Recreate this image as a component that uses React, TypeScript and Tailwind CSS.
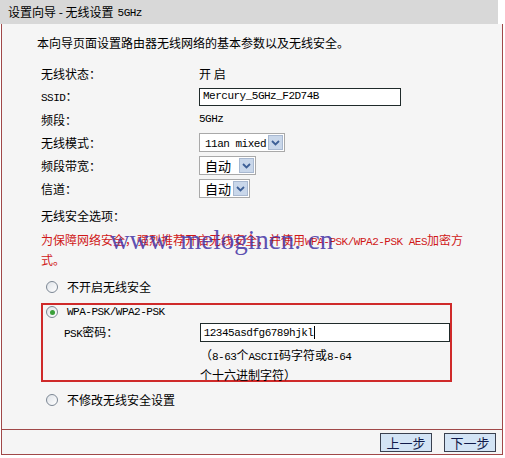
import React from 'react';

const cjk = "font-['Noto_Sans_CJK_SC','Noto_Sans',sans-serif]";

// SimSun-like half-width latin text
const A = ({ children }: { children: React.ReactNode }) => (
  <span className="font-['Liberation_Mono','DejaVu_Sans_Mono',monospace] text-[11px] tracking-[-0.5px]">
    {children}
  </span>
);

const Radio = ({ checked = false }: { checked?: boolean }) => (
  <span className="w-[12px] h-[12px] rounded-full border border-[#7c8794] bg-gradient-to-br from-[#dfe3e8] to-white flex items-center justify-center flex-shrink-0">
    {checked && <span className="w-[5px] h-[5px] rounded-full bg-[#3aa03a]" />}
  </span>
);

const Select = ({ text, width, ascii = false }: { text: string; width: number; ascii?: boolean }) => (
  <div
    className="h-[19px] border border-[#a9a9a9] bg-white flex items-center justify-between p-[1px]"
    style={{ width }}
  >
    <span className="pl-[4px] text-[13px] leading-none text-black">{ascii ? <A>{text}</A> : text}</span>
    <span className="w-[15px] h-[15px] bg-[#c9d7ea] border border-[#a8b8d0] flex items-center justify-center">
      <svg width="9" height="6" viewBox="0 0 9 6">
        <path d="M1 1 L4.5 4.5 L8 1" stroke="#3d5f96" strokeWidth="1.8" fill="none" />
      </svg>
    </span>
  </div>
);

const Row = ({ label, children }: { label: React.ReactNode; children: React.ReactNode }) => (
  <div className="h-[23px] flex items-center">
    <div className="w-[197px] pl-[39px]">{label}</div>
    <div className="flex items-center">{children}</div>
  </div>
);

export default function App() {
  return (
    <div className={`w-[505px] h-[458px] bg-white relative text-[12px] text-black ${cjk}`}>
      {/* Header */}
      <div className="w-[498px] h-[24px] bg-[#d8d8d8] flex items-center pl-[8px]">
        设置向导 - 无线设置 <span className="ml-[4px]"><A>5GHz</A></span>
      </div>

      {/* Body */}
      <div className="ml-[1px] w-[502px] h-[431px] border-x border-b border-[#a04848] bg-[#f5f5f5] flex flex-col">
        <div className="h-[405px] flex flex-col">
          <div className="h-[20px] mt-[9px] pl-[35px] flex items-center">
            本向导页面设置路由器无线网络的基本参数以及无线安全。
          </div>

          <div className="mt-[9px] flex flex-col">
            <Row label="无线状态：">
              <span>开 启</span>
            </Row>
            <Row label={<><A>SSID</A>：</>}>
              <div className="w-[202px] h-[18px] border border-[#1f2a2a] bg-white flex items-center pl-[3px]">
                <A>Mercury_5GHz_F2D74B</A>
              </div>
            </Row>
            <Row label="频段：">
              <A>5GHz</A>
            </Row>
            <Row label="无线模式：">
              <Select text="11an mixed" width={86} ascii />
            </Row>
            <Row label="频段带宽：">
              <Select text="自动" width={57} />
            </Row>
            <Row label="信道：">
              <Select text="自动" width={51} />
            </Row>
          </div>

          <div className="h-[20px] mt-[6px] pl-[39px] flex items-center">无线安全选项：</div>
          <div className="mt-[5px] pl-[39px] text-[#d01818] leading-[18px]">
            为保障网络安全，强烈推荐开启无线安全，并使用<A>WPA-PSK/WPA2-PSK AES</A>加密方
            <br />
            式。
          </div>

          <div className="h-[20px] mt-[8px] pl-[44px] flex items-center gap-[9px]">
            <Radio />
            <span>不开启无线安全</span>
          </div>

          <div className="mt-[6px] ml-[39px] w-[411px] h-[79px] border-2 border-[#cf2a2a] flex flex-col">
            <div className="h-[14px] pl-[3px] flex items-center gap-[9px]">
              <Radio checked />
              <A>WPA-PSK/WPA2-PSK</A>
            </div>
            <div className="h-[20px] mt-[4px] flex items-center">
              <div className="w-[157px] pl-[21px]">
                <A>PSK</A>密码：
              </div>
              <div className="w-[251px] h-[19px] border border-[#1f2a2a] bg-white flex items-center pl-[3px]">
                <A>12345asdfg6789hjkl</A>
                <span className="w-[1px] h-[13px] bg-black ml-[1px]" />
              </div>
            </div>
            <div className="mt-[3px] pl-[157px] leading-[18px]">
              （<A>8-63</A>个<A>ASCII</A>码字符或<A>8-64</A>
              <br />
              个十六进制字符）
            </div>
          </div>

          <div className="h-[20px] mt-[8px] pl-[44px] flex items-center gap-[9px]">
            <Radio />
            <span>不修改无线安全设置</span>
          </div>
        </div>

        {/* Footer */}
        <div className="flex-1 border-t border-[#a04848] flex items-center justify-end gap-[12px] pr-[6px]">
          <button className="w-[52px] h-[19px] bg-[#d3e4f5] border border-[#3a4150] text-[13px] leading-none text-[#101a4a] flex items-center justify-center">
            上一步
          </button>
          <button className="w-[52px] h-[19px] bg-[#d3e4f5] border border-[#3a4150] text-[13px] leading-none text-[#101a4a] flex items-center justify-center">
            下一步
          </button>
        </div>
      </div>

      {/* Watermark */}
      <div className="absolute left-[110px] top-[226px] font-['Liberation_Serif',serif] text-[27px] leading-[29px] text-[#4a3aa8]/90 pointer-events-none whitespace-pre">
        www. melogincn. cn
      </div>
    </div>
  );
}
